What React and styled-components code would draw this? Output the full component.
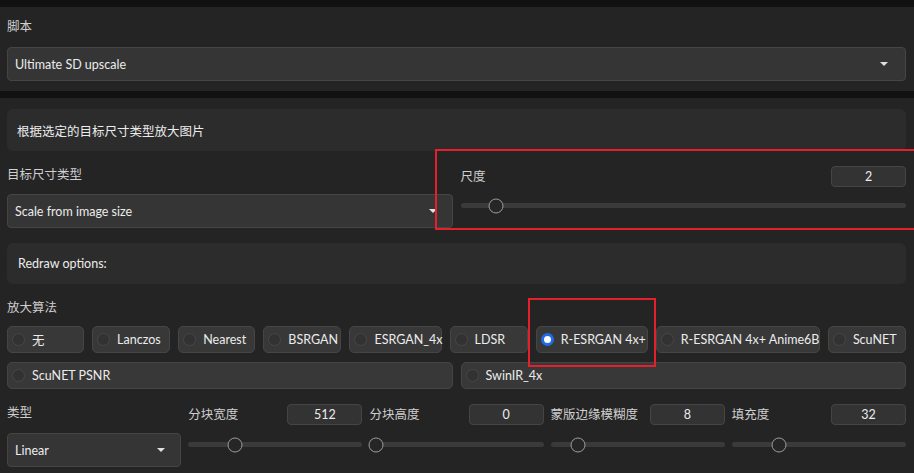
import styled, { createGlobalStyle } from "styled-components";

const GlobalStyle = createGlobalStyle`
  body {
    margin: 0;
    background: #111111;
    font-family: Lato, "Noto Sans CJK SC", sans-serif;
    font-size: 12.5px;
    color: #e6e6e6;
  }
`;

const Page = styled.div`
  position: relative;
  width: 914px;
  height: 473px;
  overflow: hidden;
  padding-top: 7px;
  box-sizing: border-box;
  display: flex;
  flex-direction: column;
  gap: 7px;
`;

const Panel = styled.div`
  background: #242424;
  padding: ${(p) => p.$pad || "11px 8px 11px 7px"};
  display: flex;
  flex-direction: column;
  gap: ${(p) => p.$gap || "15px"};
  flex: ${(p) => (p.$grow ? 1 : "none")};
`;

const Label = styled.div`
  color: #cfcfcf;
  line-height: 18px;
  height: 18px;
  margin-bottom: ${(p) => p.$mb || "0"};
  white-space: nowrap;
`;

const Field = styled.div`
  display: flex;
  flex-direction: column;
`;

const Select = styled.div`
  height: 34px;
  box-sizing: border-box;
  background: #353535;
  border: 1px solid #454545;
  border-radius: 4px;
  display: flex;
  align-items: center;
  justify-content: space-between;
  padding: 0 ${(p) => p.$pr || "17px"} 0 7px;
  color: #ececec;
`;

const Caret = styled.span`
  width: 0;
  height: 0;
  border-left: 4px solid transparent;
  border-right: 4px solid transparent;
  border-top: 4px solid #e0e0e0;
`;

const InfoBox = styled.div`
  background: #2c2c2c;
  border-radius: 6px;
  height: ${(p) => p.$h || "42px"};
  display: flex;
  align-items: center;
  padding: 0 10px 0 ${(p) => p.$pl || "10px"};
  color: #ececec;
`;

const TwoCols = styled.div`
  display: grid;
  grid-template-columns: 1fr 1fr;
  gap: 8px;
`;

const FiveCols = styled.div`
  display: grid;
  grid-template-columns: repeat(5, 1fr);
  gap: 7px;
`;

const SliderHead = styled.div`
  display: flex;
  justify-content: space-between;
  align-items: center;
  height: 21px;
`;

const NumberBox = styled.div`
  width: 75px;
  height: 21px;
  box-sizing: border-box;
  background: #333333;
  border: 1px solid #454545;
  border-radius: 4px;
  display: flex;
  align-items: center;
  justify-content: center;
  color: #ececec;
`;

const Track = styled.div`
  position: relative;
  height: 5px;
  margin: ${(p) => p.$mt || "16px"} 0 0;
  background: #3a3a3a;
  border-radius: 3px;
`;

const Thumb = styled.div`
  position: absolute;
  top: 50%;
  width: 15px;
  height: 15px;
  box-sizing: border-box;
  border: 1.5px solid #9c9c9c;
  background: #262626;
  border-radius: 50%;
  transform: translate(-50%, -50%);
`;

const RadioGroup = styled.div`
  display: flex;
  flex-direction: column;
  gap: 9px;
`;

const RadioRow = styled.div`
  display: flex;
  gap: 8px;
`;

const RadioItem = styled.div`
  width: ${(p) => p.$w}px;
  flex: ${(p) => (p.$w ? "1 1 auto" : "1 1 0")};
  height: 27px;
  box-sizing: border-box;
  background: #383838;
  border: 1px solid #454545;
  border-radius: 5px;
  display: flex;
  align-items: center;
  gap: 7px;
  padding-left: 4px;
  color: #ececec;
  white-space: nowrap;
`;

const Dot = styled.span`
  width: 13px;
  height: 13px;
  box-sizing: border-box;
  border-radius: 50%;
  flex: none;
  background: ${(p) => (p.$on ? "#fff" : "#323232")};
  border: ${(p) => (p.$on ? "3.5px solid #1f6ce6" : "1px solid #474747")};
`;

const Mark = styled.div`
  position: absolute;
  box-sizing: border-box;
  border: 2px solid #e3202b;
  pointer-events: none;
`;

const algos = [
  ["无", 77],
  ["Lanczos", 78],
  ["Nearest", 77],
  ["BSRGAN", 78],
  ["ESRGAN_4x", 92],
  ["LDSR", 78],
  ["R-ESRGAN 4x+", 112, true],
  ["R-ESRGAN 4x+ Anime6B", 164],
  ["ScuNET", 78],
];

const tiles = [
  { label: "分块宽度", value: 512, max: 2048 },
  { label: "分块高度", value: 0, max: 2048 },
  { label: "蒙版边缘模糊度", value: 8, max: 64 },
  { label: "填充度", value: 32, max: 128 },
];

const Slider = ({ value, min = 0, max, mt }) => {
  const pct = (value - min) / (max - min);
  return (
    <Track $mt={mt}>
      <Thumb style={{ left: `calc(7px + ${pct} * (100% - 14px))` }} />
    </Track>
  );
};

const App = () => {
  return (
    <Page>
      <GlobalStyle />
      <Panel $pad="11px 8px 10px 7px" $gap="0">
        <Label $mb="11px">脚本</Label>
        <Select>
          Ultimate SD upscale
          <Caret />
        </Select>
      </Panel>

      <Panel $grow>
        <InfoBox>根据选定的目标尺寸类型放大图片</InfoBox>

        <TwoCols>
          <Field>
            <Label $mb="10px">目标尺寸类型</Label>
            <Select $pr="15px">
              Scale from image size
              <Caret />
            </Select>
          </Field>
          <Field>
            <SliderHead>
              <Label>尺度</Label>
              <NumberBox>2</NumberBox>
            </SliderHead>
            <Slider value={2} min={1} max={16} />
          </Field>
        </TwoCols>

        <InfoBox $h="41px" $pl="11px">Redraw options:</InfoBox>

        <Field>
          <Label $mb="9px">放大算法</Label>
          <RadioGroup>
            <RadioRow>
              {algos.map(([name, w, on]) => (
                <RadioItem key={name} $w={w}>
                  <Dot $on={on} />
                  {name}
                </RadioItem>
              ))}
            </RadioRow>
            <RadioRow>
              <RadioItem>
                <Dot />
                ScuNET PSNR
              </RadioItem>
              <RadioItem>
                <Dot />
                SwinIR_4x
              </RadioItem>
            </RadioRow>
          </RadioGroup>
        </Field>

        <FiveCols>
          <Field>
            <Label $mb="11px">类型</Label>
            <Select $pr="15px">
              Linear
              <Caret />
            </Select>
          </Field>
          {tiles.map((t) => (
            <Field key={t.label}>
              <SliderHead>
                <Label>{t.label}</Label>
                <NumberBox>{t.value}</NumberBox>
              </SliderHead>
              <Slider value={t.value} max={t.max} mt="17px" />
            </Field>
          ))}
        </FiveCols>
      </Panel>

      <Mark style={{ left: 435, top: 149, width: 490, height: 81 }} />
      <Mark style={{ left: 528, top: 298, width: 128, height: 69 }} />
    </Page>
  );
};

export default App;
